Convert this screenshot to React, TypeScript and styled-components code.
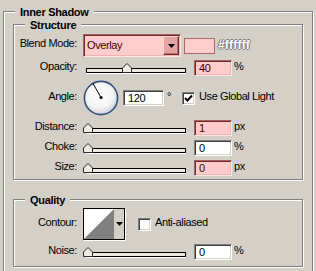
import React from 'react';
import styled, { createGlobalStyle } from 'styled-components';

const GlobalStyle = createGlobalStyle`
  html, body { margin: 0; padding: 0; background: #d4d0c8; }
  body {
    font-family: "Liberation Sans", Arial, sans-serif;
    font-size: 11px;
    letter-spacing: -0.4px;
    color: #000;
  }
`;

const Page = styled.div`
  width: 316px;
  height: 271px;
  box-sizing: border-box;
  padding: 11px 3px 0;
  overflow: hidden;
`;

const Group = styled.div<{ $mt?: number }>`
  margin-top: ${(p) => p.$mt ?? 0}px;
  border: 1px solid #808080;
  box-shadow: inset 1px 1px 0 #fff, 1px 1px 0 #fff;
`;

const Legend = styled.div`
  width: fit-content;
  margin: -6px 0 0 11px;
  padding: 0 5px;
  background: #d4d0c8;
  font-weight: bold;
  letter-spacing: -0.3px;
  line-height: 13px;
`;

const Body = styled.div<{ $pad: string }>`
  display: flex;
  flex-direction: column;
  padding: ${(p) => p.$pad};
`;

const Row = styled.div<{ $h: number; $mt?: number }>`
  display: flex;
  align-items: center;
  height: ${(p) => p.$h}px;
  margin-top: ${(p) => p.$mt ?? 0}px;
`;

const Label = styled.div`
  flex: none;
  width: 63px;
  margin-right: 6px;
  padding-bottom: 4px;
  text-align: right;
  white-space: nowrap;
  line-height: 13px;
`;

const Select = styled.div`
  flex: none;
  display: flex;
  align-items: center;
  box-sizing: border-box;
  width: 98px;
  height: 23px;
  padding: 1px;
  background: #ffcccc;
  border: 1px solid;
  border-color: #a86060 #ffe4e4 #ffe4e4 #a86060;
  box-shadow: inset 1px 1px 0 #6e2c2c, inset -1px -1px 0 #f0b4b4;
  color: #3a0000;
`;

const SelectText = styled.span`
  flex: 1;
  padding-left: 2px;
  line-height: 13px;
`;

const DropButton = styled.div`
  flex: none;
  display: flex;
  align-items: center;
  justify-content: center;
  box-sizing: border-box;
  width: 16px;
  height: 19px;
  background: #e4a4a4;
  border: 1px solid;
  border-color: #ffd8d8 #6e2c2c #6e2c2c #ffd8d8;
  box-shadow: inset -1px -1px 0 #b87070;
`;

const Swatch = styled.div`
  flex: none;
  box-sizing: border-box;
  width: 31px;
  height: 16px;
  margin-left: 3px;
  background: #ffcccc;
  border: 1px solid #a86a6a;
`;

const HexText = styled.span`
  margin-left: 3px;
  padding-bottom: 1px;
  color: #fff;
  font-size: 12px;
  font-weight: bold;
  letter-spacing: 0.2px;
  line-height: 13px;
  text-shadow: 1px 0 0 #7a7a7a, -1px 0 0 #7a7a7a, 0 1px 0 #7a7a7a,
    0 -1px 0 #7a7a7a;
`;

const Field = styled.div<{ $pink?: boolean; $w?: number }>`
  flex: none;
  box-sizing: border-box;
  width: ${(p) => p.$w ?? 38}px;
  height: 16px;
  padding-left: 4px;
  line-height: 14px;
  background: ${(p) => (p.$pink ? '#ffcccc' : '#fff')};
  color: ${(p) => (p.$pink ? '#3a0000' : '#000')};
  border: 1px solid;
  border-color: ${(p) =>
    p.$pink ? '#a86060 #ffe4e4 #ffe4e4 #a86060' : '#808080 #fff #fff #808080'};
  box-shadow: ${(p) =>
    p.$pink
      ? 'inset 1px 1px 0 #6e2c2c, inset -1px -1px 0 #f0b4b4'
      : 'inset 1px 1px 0 #404040, inset -1px -1px 0 #d4d0c8'};
`;

const Unit = styled.span<{ $ml?: number }>`
  margin-left: ${(p) => p.$ml ?? 2}px;
  padding-bottom: 4px;
  line-height: 13px;
`;

const SliderBox = styled.div`
  position: relative;
  flex: none;
  width: 104px;
  height: 16px;
  margin-right: 7px;
`;

const Track = styled.div`
  box-sizing: border-box;
  width: 100px;
  height: 5px;
  margin: 8px 0 0 3px;
  background: #ece9e4;
  border: 1px solid #000;
  box-shadow: 0 1px 0 #fff;
`;

const ThumbWrap = styled.div`
  position: absolute;
  top: 3px;
  width: 10px;
  height: 10px;
  line-height: 0;
`;

const DialWrap = styled.div`
  flex: none;
  width: 36px;
  height: 36px;
  margin-right: 4px;
  line-height: 0;
`;

const Check = styled.div<{ $ml: number }>`
  flex: none;
  display: flex;
  align-items: center;
  justify-content: center;
  box-sizing: border-box;
  width: 13px;
  height: 13px;
  margin-left: ${(p) => p.$ml}px;
  background: #fff;
  border: 1px solid;
  border-color: #808080 #fff #fff #808080;
  box-shadow: inset 1px 1px 0 #404040, inset -1px -1px 0 #d4d0c8;
`;

const CheckText = styled.span`
  margin-left: 4px;
  padding-bottom: 4px;
  line-height: 13px;
  white-space: nowrap;
`;

const Contour = styled.div`
  flex: none;
  display: flex;
  box-sizing: border-box;
  width: 42px;
  height: 32px;
  background: #d4d0c8;
  border: 1px solid #000;
  box-shadow: 1px 1px 0 #fff;
`;

const ContourPreview = styled.div`
  flex: none;
  width: 30px;
  height: 30px;
  line-height: 0;
`;

const ContourDrop = styled.div`
  flex: 1;
  display: flex;
  align-items: center;
  justify-content: center;
`;

const Arrow = () => (
  <svg width="7" height="4" viewBox="0 0 7 4">
    <polygon points="0,0 7,0 3.5,4" fill="#000" />
  </svg>
);

const Thumb = () => (
  <svg width="10" height="10" viewBox="0 0 10 10">
    <path
      d="M5 0.5 L9.5 5 L9.5 9.5 L0.5 9.5 L0.5 5 Z"
      fill="#eeece6"
      stroke="#2a2a2a"
    />
  </svg>
);

const Dial = () => (
  <svg width="36" height="36" viewBox="0 0 36 36">
    <defs>
      <radialGradient id="dialFill" cx="45%" cy="40%" r="62%">
        <stop offset="0" stopColor="#ffffff" />
        <stop offset="0.65" stopColor="#f3f3f3" />
        <stop offset="1" stopColor="#c9cdd8" />
      </radialGradient>
    </defs>
    <circle cx="18" cy="18" r="16.6" fill="url(#dialFill)" stroke="#36507e" strokeWidth="1.6" />
    <line x1="18" y1="17.5" x2="10" y2="3.6" stroke="#000" strokeWidth="1" />
    <circle cx="18" cy="17.5" r="1.6" fill="#000" />
  </svg>
);

const CheckMark = () => (
  <svg width="9" height="9" viewBox="0 0 9 9">
    <polyline points="1,4 3.5,6.5 8,1.5" fill="none" stroke="#000" strokeWidth="1.9" />
  </svg>
);

type SliderRowProps = {
  label: string;
  value: string;
  fraction: number;
  unit: string;
  pink?: boolean;
  mt: number;
};

const SliderRow = ({ label, value, fraction, unit, pink, mt }: SliderRowProps) => (
  <Row $h={16} $mt={mt}>
    <Label>{label}</Label>
    <SliderBox>
      <Track />
      <ThumbWrap style={{ left: Math.round(fraction * 97) }}>
        <Thumb />
      </ThumbWrap>
    </SliderBox>
    <Field $pink={pink}>{value}</Field>
    <Unit>{unit}</Unit>
  </Row>
);

const App = () => {
  return (
    <Page>
      <GlobalStyle />
      <Group>
        <Legend>Inner Shadow</Legend>
        <Body $pad="5px 9px 12px">
          <Group>
            <Legend>Structure</Legend>
            <Body $pad="2px 0 3px">
              <Row $h={23}>
                <Label>Blend Mode:</Label>
                <Select>
                  <SelectText>Overlay</SelectText>
                  <DropButton>
                    <Arrow />
                  </DropButton>
                </Select>
                <Swatch />
                <HexText>#ffffff</HexText>
              </Row>
              <SliderRow label="Opacity:" value="40" fraction={0.4} unit="%" pink mt={3} />
              <Row $h={36} $mt={4}>
                <Label>Angle:</Label>
                <DialWrap>
                  <Dial />
                </DialWrap>
                <Field $w={41}>120</Field>
                <Unit $ml={3}>°</Unit>
                <Check $ml={11}>
                  <CheckMark />
                </Check>
                <CheckText>Use Global Light</CheckText>
              </Row>
              <SliderRow label="Distance:" value="1" fraction={0} unit="px" pink mt={4} />
              <SliderRow label="Choke:" value="0" fraction={0} unit="%" mt={4} />
              <SliderRow label="Size:" value="0" fraction={0} unit="px" pink mt={4} />
            </Body>
          </Group>
          <Group $mt={19}>
            <Legend>Quality</Legend>
            <Body $pad="1px 0 6px">
              <Row $h={32}>
                <Label>Contour:</Label>
                <Contour>
                  <ContourPreview>
                    <svg width="30" height="30" viewBox="0 0 30 30">
                      <rect width="30" height="30" fill="#fff" />
                      <polygon points="0,30 30,0 30,30" fill="#808080" />
                    </svg>
                  </ContourPreview>
                  <ContourDrop>
                    <Arrow />
                  </ContourDrop>
                </Contour>
                <Check $ml={13} />
                <CheckText>Anti-aliased</CheckText>
              </Row>
              <SliderRow label="Noise:" value="0" fraction={0} unit="%" mt={4} />
            </Body>
          </Group>
        </Body>
      </Group>
    </Page>
  );
};

export default App;
